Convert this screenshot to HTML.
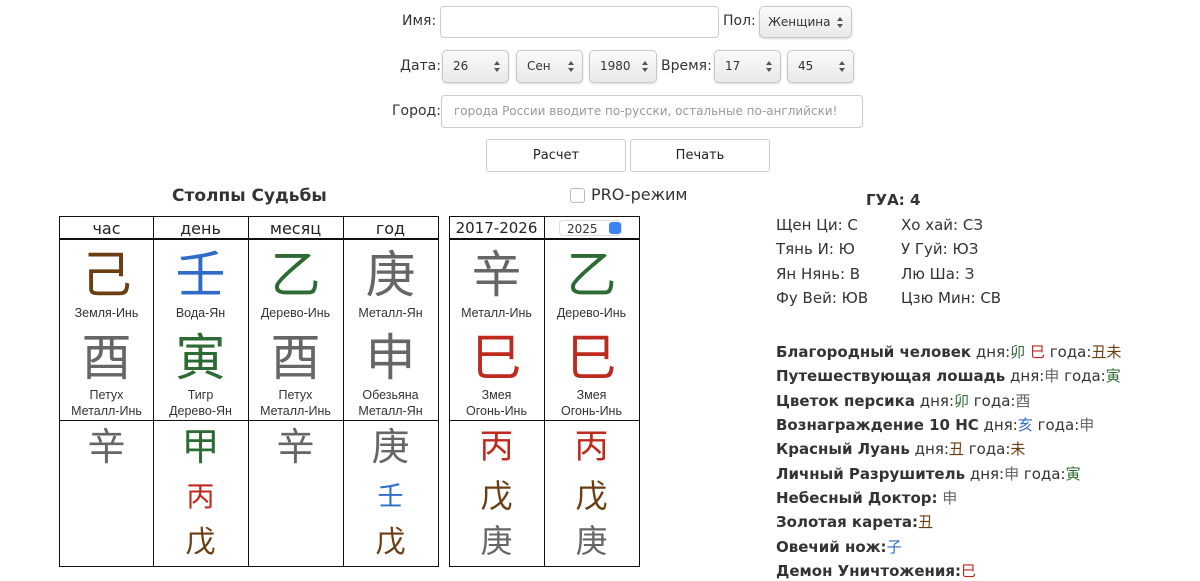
<!DOCTYPE html>
<html><head><meta charset="utf-8"><style>
body{margin:0;width:1200px;height:579px;background:#fff;position:relative;overflow:hidden;font-family:"DejaVu Sans","Liberation Sans","Noto Sans CJK SC",sans-serif;color:#333}
.a{position:absolute;white-space:nowrap}
.inp{position:absolute;border:1px solid #ccc;border-radius:4px;background:#fff;box-sizing:border-box}
.sel{position:absolute;border:1px solid #c8c8c8;border-radius:5px;background:linear-gradient(#fafafa,#e9e9e9);box-sizing:border-box;font-size:12px;line-height:30px;padding-left:10px;color:#333;box-shadow:0 1px 2px rgba(0,0,0,.15);white-space:nowrap}
.sel:after{content:"";position:absolute;right:8px;top:10px;border:3px solid transparent;border-bottom:4px solid #555;border-top:0}
.sel:before{content:"";position:absolute;right:8px;top:17px;border:3px solid transparent;border-top:4px solid #555;border-bottom:0}
.lbl{position:absolute;font-size:14px;color:#333}
.btn{position:absolute;border:1px solid #ccc;border-radius:3px;background:#fff;font-size:13px;text-align:center;line-height:31px;box-sizing:border-box;color:#222}
.cell{position:absolute;border:1px solid #111;box-sizing:border-box}
.c{position:absolute;text-align:center;font-family:"Noto Sans CJK SC",sans-serif;line-height:1}
.s{position:absolute;text-align:center;font-family:"Liberation Sans",sans-serif;font-size:12.5px;color:#333;line-height:16px}
.h{position:absolute;text-align:center;font-size:16px;line-height:23px;color:#222}
.br{color:#6b3d12}.bl{color:#2f6bc8}.gr{color:#2d6b34}.gy{color:#666}.rd{color:#bf2a1f}
.cj{font-family:"Noto Sans CJK SC",sans-serif;font-weight:normal}
.r{position:absolute;font-size:15px;color:#333;white-space:nowrap}
.r b{font-weight:bold}
</style></head><body>
<div class="lbl" style="left:402px;top:13px">Имя:</div>
<div class="inp" style="left:440px;top:6px;width:279px;height:32px"></div>
<div class="lbl" style="left:723px;top:13px">Пол:</div>
<div class="sel" style="left:759px;top:6px;width:93px;height:32px;padding-left:8px">Женщина</div>
<div class="lbl" style="left:400px;top:58px">Дата:</div>
<div class="sel" style="left:442px;top:50px;width:67px;height:33px">26</div>
<div class="sel" style="left:516px;top:50px;width:67px;height:33px">Сен</div>
<div class="sel" style="left:589px;top:50px;width:68px;height:33px">1980</div>
<div class="lbl" style="left:661px;top:58px">Время:</div>
<div class="sel" style="left:714px;top:50px;width:67px;height:33px">17</div>
<div class="sel" style="left:787px;top:50px;width:67px;height:33px">45</div>
<div class="lbl" style="left:392px;top:103px">Город:</div>
<div class="inp" style="left:441px;top:95px;width:422px;height:33px;font-size:12px;color:#999;line-height:31px;padding-left:12px;white-space:nowrap;overflow:hidden">города России вводите по-русски, остальные по-английски!</div>
<div class="btn" style="left:486px;top:139px;width:140px;height:33px">Расчет</div>
<div class="btn" style="left:630px;top:139px;width:140px;height:33px">Печать</div>

<div class="a" style="left:172px;top:186px;font-size:17px;font-weight:bold;color:#333">Столпы Судьбы</div>
<div class="a" style="left:570px;top:188px;width:13px;height:13px;border:1px solid #bbb;border-radius:3px"></div>
<div class="a" style="left:591px;top:185px;font-size:16px;color:#333">PRO-режим</div>

<div class="cell" style="left:59px;top:216px;width:380px;height:351px"></div>
<div class="a" style="left:59px;top:238px;width:380px;height:2px;background:#111"></div>
<div class="a" style="left:59px;top:420px;width:380px;height:1px;background:#111"></div>
<div class="a" style="left:153px;top:216px;width:1px;height:351px;background:#111"></div>
<div class="a" style="left:248px;top:216px;width:1px;height:351px;background:#111"></div>
<div class="a" style="left:343px;top:216px;width:1px;height:351px;background:#111"></div>
<div class="cell" style="left:449px;top:216px;width:191px;height:351px"></div>
<div class="a" style="left:449px;top:238px;width:191px;height:2px;background:#111"></div>
<div class="a" style="left:449px;top:420px;width:191px;height:1px;background:#111"></div>
<div class="a" style="left:544px;top:216px;width:1px;height:351px;background:#111"></div>

<div class="h" style="left:59px;top:217px;width:95px">час</div>
<div class="h" style="left:153px;top:217px;width:95px">день</div>
<div class="h" style="left:248px;top:217px;width:95px">месяц</div>
<div class="h" style="left:343px;top:217px;width:95px">год</div>
<div class="h" style="left:449px;top:217px;width:95px;font-size:15px">2017-2026</div>
<div class="a" style="left:559px;top:220px;width:63px;height:16px;border:1px solid #ddd;border-radius:4px;font-size:12px;line-height:16px;padding-left:7px;box-sizing:border-box">2025</div>
<div class="a" style="left:609px;top:222px;width:12px;height:12px;border-radius:3px;background:#3b82f0"></div>

<div class="c br" style="left:59px;top:246px;width:95px;font-size:50px">己</div>
<div class="c bl" style="left:153px;top:246px;width:95px;font-size:50px">壬</div>
<div class="c gr" style="left:248px;top:246px;width:95px;font-size:50px">乙</div>
<div class="c gy" style="left:343px;top:246px;width:95px;font-size:50px">庚</div>
<div class="c gy" style="left:449px;top:246px;width:95px;font-size:50px">辛</div>
<div class="c gr" style="left:544px;top:246px;width:95px;font-size:50px">乙</div>
<div class="s" style="left:59px;top:305px;width:95px">Земля-Инь</div>
<div class="s" style="left:153px;top:305px;width:95px">Вода-Ян</div>
<div class="s" style="left:248px;top:305px;width:95px">Дерево-Инь</div>
<div class="s" style="left:343px;top:305px;width:95px">Металл-Ян</div>
<div class="s" style="left:449px;top:305px;width:95px">Металл-Инь</div>
<div class="s" style="left:544px;top:305px;width:95px">Дерево-Инь</div>
<div class="c gy" style="left:59px;top:329px;width:95px;font-size:50px">酉</div>
<div class="c gr" style="left:153px;top:329px;width:95px;font-size:50px">寅</div>
<div class="c gy" style="left:248px;top:329px;width:95px;font-size:50px">酉</div>
<div class="c gy" style="left:343px;top:329px;width:95px;font-size:50px">申</div>
<div class="c rd" style="left:449px;top:329px;width:95px;font-size:50px">巳</div>
<div class="c rd" style="left:544px;top:329px;width:95px;font-size:50px">巳</div>
<div class="s" style="left:59px;top:387px;width:95px">Петух<br>Металл-Инь</div>
<div class="s" style="left:153px;top:387px;width:95px">Тигр<br>Дерево-Ян</div>
<div class="s" style="left:248px;top:387px;width:95px">Петух<br>Металл-Инь</div>
<div class="s" style="left:343px;top:387px;width:95px">Обезьяна<br>Металл-Ян</div>
<div class="s" style="left:449px;top:387px;width:95px">Змея<br>Огонь-Инь</div>
<div class="s" style="left:544px;top:387px;width:95px">Змея<br>Огонь-Инь</div>
<div class="c gy" style="left:59px;top:425px;width:95px;font-size:38px">辛</div>
<div class="c gr" style="left:153px;top:425px;width:95px;font-size:38px">甲</div>
<div class="c rd" style="left:153px;top:481px;width:95px;font-size:28px">丙</div>
<div class="c br" style="left:153px;top:524px;width:95px;font-size:30px">戊</div>
<div class="c gy" style="left:248px;top:425px;width:95px;font-size:38px">辛</div>
<div class="c gy" style="left:343px;top:425px;width:95px;font-size:38px">庚</div>
<div class="c bl" style="left:343px;top:482px;width:95px;font-size:26px">壬</div>
<div class="c br" style="left:343px;top:524px;width:95px;font-size:30px">戊</div>
<div class="c rd" style="left:449px;top:427px;width:95px;font-size:34px">丙</div>
<div class="c br" style="left:449px;top:478px;width:95px;font-size:32px">戊</div>
<div class="c gy" style="left:449px;top:523px;width:95px;font-size:32px">庚</div>
<div class="c rd" style="left:544px;top:427px;width:95px;font-size:34px">丙</div>
<div class="c br" style="left:544px;top:478px;width:95px;font-size:32px">戊</div>
<div class="c gy" style="left:544px;top:523px;width:95px;font-size:32px">庚</div>

<div class="r" style="left:866px;top:191px;font-weight:bold">ГУА: 4</div>
<div class="r" style="left:776px;top:216px">Щен Ци: С</div><div class="r" style="left:901px;top:216px">Хо хай: СЗ</div>
<div class="r" style="left:776px;top:240px">Тянь И: Ю</div><div class="r" style="left:901px;top:240px">У Гуй: ЮЗ</div>
<div class="r" style="left:776px;top:265px">Ян Нянь: В</div><div class="r" style="left:901px;top:265px">Лю Ша: З</div>
<div class="r" style="left:776px;top:289px">Фу Вей: ЮВ</div><div class="r" style="left:901px;top:289px">Цзю Мин: СВ</div>

<div class="r" style="left:776px;top:341px"><b>Благородный человек</b> дня:<span class="cj gr">卯</span> <span class="cj rd">巳</span> года:<span class="cj br">丑未</span></div>
<div class="r" style="left:776px;top:365px"><b>Путешествующая лошадь</b> дня:<span class="cj gy">申</span> года:<span class="cj gr">寅</span></div>
<div class="r" style="left:776px;top:390px"><b>Цветок персика</b> дня:<span class="cj gr">卯</span> года:<span class="cj gy">酉</span></div>
<div class="r" style="left:776px;top:414px"><b>Вознаграждение 10 НС</b> дня:<span class="cj bl">亥</span> года:<span class="cj gy">申</span></div>
<div class="r" style="left:776px;top:438px"><b>Красный Луань</b> дня:<span class="cj br">丑</span> года:<span class="cj br">未</span></div>
<div class="r" style="left:776px;top:463px"><b>Личный Разрушитель</b> дня:<span class="cj gy">申</span> года:<span class="cj gr">寅</span></div>
<div class="r" style="left:776px;top:487px"><b>Небесный Доктор:</b> <span class="cj gy">申</span></div>
<div class="r" style="left:776px;top:511px"><b>Золотая карета:</b><span class="cj br">丑</span></div>
<div class="r" style="left:776px;top:536px"><b>Овечий нож:</b><span class="cj bl">子</span></div>
<div class="r" style="left:776px;top:560px"><b>Демон Уничтожения:</b><span class="cj rd">巳</span></div>
</body></html>
